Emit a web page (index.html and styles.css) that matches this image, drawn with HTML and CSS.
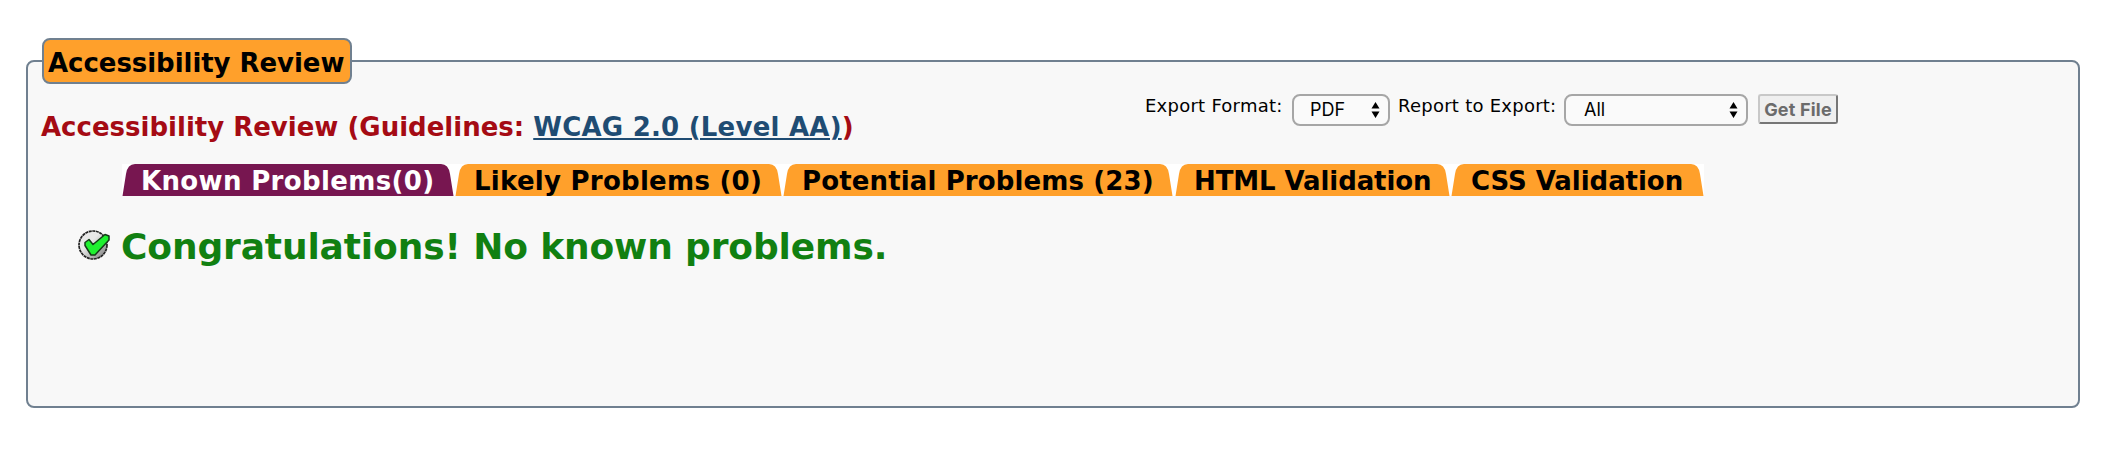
FILE: index.html
```html
<!DOCTYPE html>
<html lang="en">
<head>
<meta charset="utf-8">
<title>Accessibility Review</title>
<link rel="stylesheet" href="styles.css">
</head>
<body>
<svg class="defs" width="0" height="0" aria-hidden="true">
  <symbol id="cap" viewBox="0 0 14 32"><path d="M.5 32 L4 10 Q5.500 0 13 0 H14 V32 Z" fill="currentColor"/></symbol>
  <symbol id="arrows" viewBox="0 0 9 16"><path d="M4.500 0 L8.500 6.500 H.5 Z M4.500 16 L.5 9.500 H8.500 Z"/></symbol>
</svg>
<section class="review">
  <div class="legend">Accessibility Review</div>
  <div class="top">
    <h2 class="heading">Accessibility Review (Guidelines: <a class="guide" href="#">WCAG 2.0 (Level AA)</a>)</h2>
    <div class="export">
      <span class="label format-label">Export Format:</span>
      <div class="select format"><span>PDF</span><svg width="9" height="16"><use href="#arrows"/></svg></div>
      <span class="label report-label">Report to Export:</span>
      <div class="select report"><span>All</span><svg width="9" height="16"><use href="#arrows"/></svg></div>
      <button class="get" disabled>Get File</button>
    </div>
  </div>
  <nav class="tabs">
    <div class="tab known"><svg class="cap"><use href="#cap"/></svg><span class="name">Known Problems(0)</span><svg class="cap end"><use href="#cap"/></svg></div>
    <div class="tab likely"><svg class="cap"><use href="#cap"/></svg><span class="name">Likely Problems (0)</span><svg class="cap end"><use href="#cap"/></svg></div>
    <div class="tab potential"><svg class="cap"><use href="#cap"/></svg><span class="name">Potential Problems (23)</span><svg class="cap end"><use href="#cap"/></svg></div>
    <div class="tab html"><svg class="cap"><use href="#cap"/></svg><span class="name">HTML Validation</span><svg class="cap end"><use href="#cap"/></svg></div>
    <div class="tab css"><svg class="cap"><use href="#cap"/></svg><span class="name">CSS Validation</span><svg class="cap end"><use href="#cap"/></svg></div>
  </nav>
  <div class="result">
    <svg class="tick" width="32" height="30" viewBox="0 0 32 30">
      <defs><linearGradient id="disc" x1="0" y1="0" x2="1" y2="1"><stop offset=".4" stop-color="#e8e8e8"/><stop offset="1" stop-color="#777"/></linearGradient></defs>
      <circle cx="15" cy="15" r="14" fill="url(#disc)" stroke="#222" stroke-width="1.700" stroke-dasharray="3 .6"/>
      <path d="M7 12.500 L11 9.500 L15 14.500 L27 4.500 L31 6 L31 10 L17 25 L13 25 L7 15.500 Z" fill="#1ff030" stroke="#153a18" stroke-width="1.500" stroke-linejoin="round"/>
    </svg>
    <span class="message">Congratulations! No known problems.</span>
  </div>
</section>
</body>
</html>
```

FILE: styles.css
```css
* { box-sizing: border-box; }
body {
  margin: 0;
  padding: 60px 40px 0 26px;
  background: #fff;
  color: #000;
  font-family: Verdana, "DejaVu Sans", sans-serif;
}
svg { display: block; flex: none; }
.defs { position: absolute; }
.review {
  height: 348px;
  border: 2px solid #708090;
  border-radius: 8px;
  background: #f8f8f8;
}
.legend {
  width: 310px;
  height: 46px;
  margin: -24px 0 0 14px;
  padding: 3px 0 0 4px;
  border: 2px solid #708090;
  border-radius: 8px;
  background: #ffa02b;
  font-size: 26px;
  font-weight: bold;
  line-height: 40px;
  letter-spacing: -.05px;
  white-space: nowrap;
}
.top {
  display: flex;
  align-items: flex-start;
  height: 80px;
  padding-left: 13px;
}
.heading {
  width: 1104px;
  margin: 27px 0 0;
  color: #a50b14;
  font-size: 26px;
  line-height: 32px;
  white-space: nowrap;
}
.guide {
  color: #1f4c73;
  letter-spacing: .23px;
  text-decoration-thickness: 2px;
  text-underline-offset: 2px;
}
.export {
  display: flex;
  align-items: flex-start;
  padding-top: 10px;
}
.label {
  padding-top: 1px;
  font-size: 18px;
  line-height: 22px;
  letter-spacing: .25px;
  white-space: nowrap;
}
.format-label { width: 147px; }
.report-label { width: 166px; margin-left: 8px; }
.select {
  display: flex;
  align-items: center;
  justify-content: space-between;
  height: 32px;
  border: 2px solid #a6a6a6;
  border-radius: 8px;
  background: #fafafa;
  font: 18px/28px Inter, sans-serif;
}
.format { width: 98px; padding: 0 8px 0 16px; }
.report { width: 184px; padding: 0 8px 0 18px; }
.get {
  width: 80px;
  height: 30px;
  margin-left: 10px;
  padding: 1px 0 0;
  border: 2px solid;
  border-color: #c8c8c8 #767676 #767676 #c8c8c8;
  border-radius: 3px;
  background: #efefef;
  color: #6b6b6b;
  font: bold 18px/25px Inter, sans-serif;
  letter-spacing: .2px;
}
.tabs {
  display: flex;
  width: 1582px;
  height: 32px;
  margin-left: 94px;
  background: #fff;
}
.tab {
  display: flex;
  justify-content: space-between;
  height: 32px;
  margin-right: 1px;
  color: #ffa02b;
}
.cap { width: 14px; height: 32px; }
.end { transform: scaleX(-1); }
.name {
  flex: 1;
  height: 32px;
  padding: 1px 0 0 5px;
  background: #ffa02b;
  color: #000;
  font-size: 26px;
  font-weight: bold;
  line-height: 32px;
  white-space: nowrap;
}
.known { width: 332px; color: #771650; }
.known .name { background: #771650; color: #fff; letter-spacing: .35px; }
.likely { width: 327px; }
.likely .name { letter-spacing: .27px; }
.potential { width: 390px; margin-right: 2px; }
.potential .name { letter-spacing: .13px; }
.html { width: 275px; }
.html .name { letter-spacing: -.1px; }
.css { width: 253px; margin-right: 0; }
.css .name { padding-left: 6px; letter-spacing: -.05px; }
.result {
  display: flex;
  align-items: flex-start;
  gap: 11px;
  padding: 30px 0 0 50px;
}
.tick { margin-top: 4px; }
.message {
  color: #118011;
  font-size: 36px;
  font-weight: bold;
  line-height: 42px;
  letter-spacing: -.13px;
  white-space: nowrap;
}
```
